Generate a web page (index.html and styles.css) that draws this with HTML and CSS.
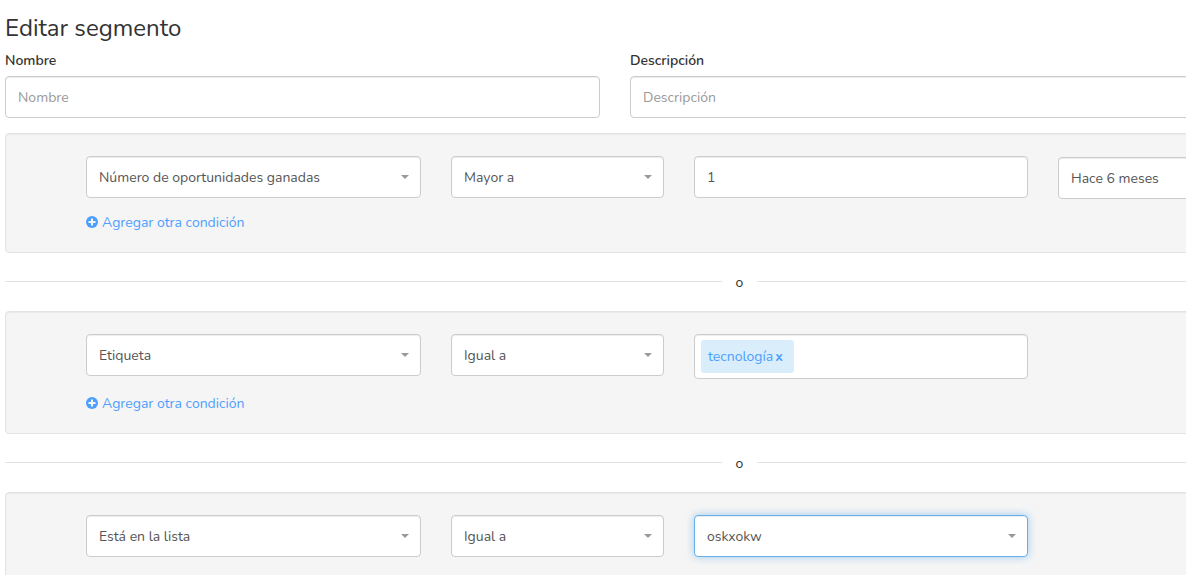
FILE: index.html
```html
<!DOCTYPE html>
<html lang="es">
<head>
<meta charset="utf-8">
<title>Editar segmento</title>
<link rel="stylesheet" href="styles.css">
</head>
<body>
<main class="page">
<form class="segment-form">
  <h1 class="title">Editar segmento</h1>

  <div class="details">
    <div class="field">
      <label class="field-label" for="name">Nombre</label>
      <input class="control" id="name" type="text" placeholder="Nombre">
    </div>
    <div class="field">
      <label class="field-label" for="description">Descripción</label>
      <input class="control" id="description" type="text" placeholder="Descripción">
    </div>
  </div>

  <section class="group">
    <div class="conditions">
      <div class="picker"><select class="control" aria-label="Campo"><option>Número de oportunidades ganadas</option></select></div>
      <div class="picker"><select class="control" aria-label="Operador"><option>Mayor a</option></select></div>
      <input class="control" type="text" value="1" aria-label="Valor">
      <div class="picker picker-period"><select class="control" aria-label="Periodo"><option>Hace 6 meses</option></select></div>
    </div>
    <a class="add" href="#"><svg class="add-icon" viewBox="0 0 12 12" aria-hidden="true"><circle cx="6" cy="6" r="6" fill="currentColor"/><path d="M6 2.5v7M2.5 6h7" stroke="#f5f5f5" stroke-width="2"/></svg>Agregar otra condición</a>
  </section>

  <div class="divider">o</div>

  <section class="group">
    <div class="conditions">
      <div class="picker"><select class="control" aria-label="Campo"><option>Etiqueta</option></select></div>
      <div class="picker"><select class="control" aria-label="Operador"><option>Igual a</option></select></div>
      <div class="tags">
        <span class="tag">tecnología<button class="tag-remove" type="button" aria-label="Quitar tecnología">x</button></span>
        <input class="tag-input" type="text" aria-label="Etiquetas">
      </div>
    </div>
    <a class="add" href="#"><svg class="add-icon" viewBox="0 0 12 12" aria-hidden="true"><circle cx="6" cy="6" r="6" fill="currentColor"/><path d="M6 2.5v7M2.5 6h7" stroke="#f5f5f5" stroke-width="2"/></svg>Agregar otra condición</a>
  </section>

  <div class="divider">o</div>

  <section class="group">
    <div class="conditions">
      <div class="picker"><select class="control" aria-label="Campo"><option>Está en la lista</option></select></div>
      <div class="picker"><select class="control" aria-label="Operador"><option>Igual a</option></select></div>
      <div class="picker"><select class="control control-active" aria-label="Lista"><option>oskxokw</option></select></div>
    </div>
  </section>
</form>
</main>
</body>
</html>
```
FILE: styles.css
```css
* { box-sizing: border-box; }

body {
  margin: 0;
  height: 100vh;
  overflow: hidden;
  background: #fff;
  color: #333;
  font: 14px/20px Nunito, "Open Sans", "Noto Sans", sans-serif;
}

.page { padding: 14px 5px 0; }

.segment-form { min-width: 1469px; }

.title {
  margin: 0 0 9px;
  font-size: 24px;
  line-height: 28px;
  font-weight: 400;
}

.details {
  display: grid;
  grid-template-columns: 595fr 595fr 219fr;
  column-gap: 30px;
  margin-bottom: 15px;
}

.field-label {
  display: block;
  margin-bottom: 5px;
  font-weight: 600;
}

.control {
  display: block;
  width: 100%;
  height: 42px;
  margin: 0;
  padding: 0 12px;
  border: 1px solid #ccc;
  border-radius: 4px;
  background: #fff;
  box-shadow: inset 0 1px 1px rgba(0, 0, 0, .075);
  color: #555;
  font: inherit;
  appearance: none;
  outline: 0;
}

.control::placeholder { color: #999; opacity: 1; }

select.control { padding-top: 2px; }

.control-active {
  border-color: #66afe9;
  box-shadow: inset 0 1px 1px rgba(0, 0, 0, .075), 0 0 8px rgba(102, 175, 233, .6);
}

.group {
  padding: 22px 80px 19px;
  border: 1px solid #e3e3e3;
  border-radius: 4px;
  background: #f5f5f5;
  box-shadow: inset 0 1px 1px rgba(0, 0, 0, .05);
}

.conditions {
  display: grid;
  grid-template-columns: 335fr 213fr 334fr 335fr;
  column-gap: 30px;
  align-items: start;
  margin-bottom: 14px;
}

.picker { position: relative; }

.picker-period { padding-top: 1px; }

.picker::after {
  content: "";
  position: absolute;
  right: 12px;
  top: 19px;
  border: 4px solid transparent;
  border-top-color: #999;
  border-bottom: 0;
  pointer-events: none;
}

.add {
  display: flex;
  align-items: center;
  gap: 4px;
  width: max-content;
  color: #4d9fff;
  text-decoration: none;
}

.add-icon {
  width: 12px;
  height: 12px;
  margin-bottom: 2px;
}

.divider {
  display: flex;
  align-items: center;
  gap: 14px;
  height: 58px;
  padding-top: 2px;
}

.divider::before,
.divider::after {
  content: "";
  flex: 1;
  height: 1px;
  margin-bottom: 3px;
  background: #e3e3e3;
}

.tags {
  display: flex;
  min-height: 45px;
  margin-bottom: 1px;
  padding: 5px 6px;
  border: 1px solid #ccc;
  border-radius: 4px;
  background: #fff;
  box-shadow: inset 0 1px 1px rgba(0, 0, 0, .075);
}

.tag {
  display: flex;
  align-items: center;
  gap: 2px;
  padding: 0 11px 0 7px;
  border-radius: 3px;
  background: #d9eefa;
  color: #4d9fff;
}

.tag-remove {
  padding: 0;
  border: 0;
  background: none;
  color: inherit;
  font: inherit;
  font-weight: 700;
}

.tag-input {
  flex: 1;
  min-width: 0;
  padding: 0 6px;
  border: 0;
  outline: 0;
  background: none;
  color: #555;
  font: inherit;
}
```
